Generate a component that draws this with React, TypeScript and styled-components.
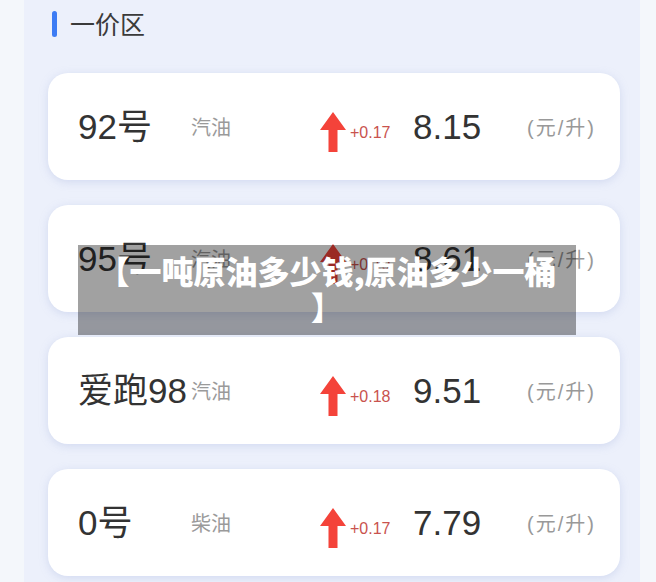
import React from "react";
import styled, { createGlobalStyle } from "styled-components";

const Global = createGlobalStyle`
  html, body { margin: 0; padding: 0; background: #f4f7fb; }
  body { font-family: "Liberation Sans", "Noto Sans CJK SC", sans-serif; }
`;

const Page = styled.div`
  position: relative;
  width: 656px;
  height: 582px;
  overflow: hidden;
  background: #f4f7fb;
`;

const Panel = styled.div`
  margin: 0 16px 0 24px;
  height: 100%;
  background: #ecf0fb;
  display: flex;
  flex-direction: column;
`;

const Header = styled.div`
  display: flex;
  align-items: center;
  gap: 13px;
  padding: 10px 0 0 28px;
  height: 28px;
`;

const Bar = styled.div`
  width: 5px;
  height: 26px;
  border-radius: 3px;
  background: #3d7cf4;
`;

const Title = styled.div`
  font-family: "Noto Sans CJK SC", sans-serif;
  font-size: 25px;
  color: #3a3a3a;
  line-height: 28px;
  margin-top: -2px;
`;

const List = styled.div`
  display: flex;
  flex-direction: column;
  gap: 25px;
  padding: 35px 20px 0 24px;
`;

const Card = styled.div`
  height: 107px;
  border-radius: 20px;
  background: #ffffff;
  box-shadow: 0 2px 8px rgba(160, 175, 220, 0.35);
  display: grid;
  grid-template-columns: 1fr 93px 114px 70px;
  align-items: center;
  padding: 0 23px 0 30px;
`;

const Left = styled.div`
  display: flex;
  align-items: center;
`;

const Name = styled.div`
  min-width: 113px;
  font-size: 35px;
  color: #333;
  line-height: 1;
  white-space: nowrap;
`;

const Kind = styled.div`
  font-family: "Noto Sans CJK SC", sans-serif;
  font-size: 20px;
  color: #9a9a9a;
`;

const Change = styled.div`
  display: flex;
  align-items: center;
  gap: 4px;
  margin-top: 11px;
`;

const Delta = styled.span`
  font-size: 16px;
  color: #c9534e;
  margin-top: 1px;
`;

const Price = styled.div`
  font-size: 35px;
  color: #333;
  line-height: 1;
`;

const Unit = styled.div`
  font-size: 20px;
  color: #999;
  letter-spacing: 2px;
  white-space: nowrap;
`;

const Caption = styled.div`
  position: absolute;
  left: 78px;
  top: 245px;
  width: 498px;
  height: 90px;
  box-sizing: border-box;
  padding: 7px 14px 0;
  background: rgba(0, 0, 0, 0.37);
  color: #fff;
  font-family: "Noto Sans CJK SC", sans-serif;
  font-weight: 900;
  font-size: 32px;
  line-height: 36px;
  text-align: center;
  line-break: anywhere;
  word-break: break-all;
`;

const Arrow = () => (
  <svg width="26" height="40" viewBox="0 0 26 40">
    <polygon points="13,0 26,18 17.5,18 17.5,40 8.5,40 8.5,18 0,18" fill="#f4433a" />
  </svg>
);

const rows = [
  { name: "92号", kind: "汽油", delta: "+0.17", price: "8.15" },
  { name: "95号", kind: "汽油", delta: "+0.19", price: "8.61" },
  { name: "爱跑98", kind: "汽油", delta: "+0.18", price: "9.51" },
  { name: "0号", kind: "柴油", delta: "+0.17", price: "7.79" },
];

export default function App() {
  return (
    <Page>
      <Global />
      <Panel>
        <Header>
          <Bar />
          <Title>一价区</Title>
        </Header>
        <List>
          {rows.map((r) => (
            <Card key={r.name}>
              <Left>
                <Name>{r.name}</Name>
                <Kind>{r.kind}</Kind>
              </Left>
              <Change>
                <Arrow />
                <Delta>{r.delta}</Delta>
              </Change>
              <Price>{r.price}</Price>
              <Unit>(元/升)</Unit>
            </Card>
          ))}
        </List>
      </Panel>
      <Caption>【一吨原油多少钱,原油多少一桶】</Caption>
    </Page>
  );
}
